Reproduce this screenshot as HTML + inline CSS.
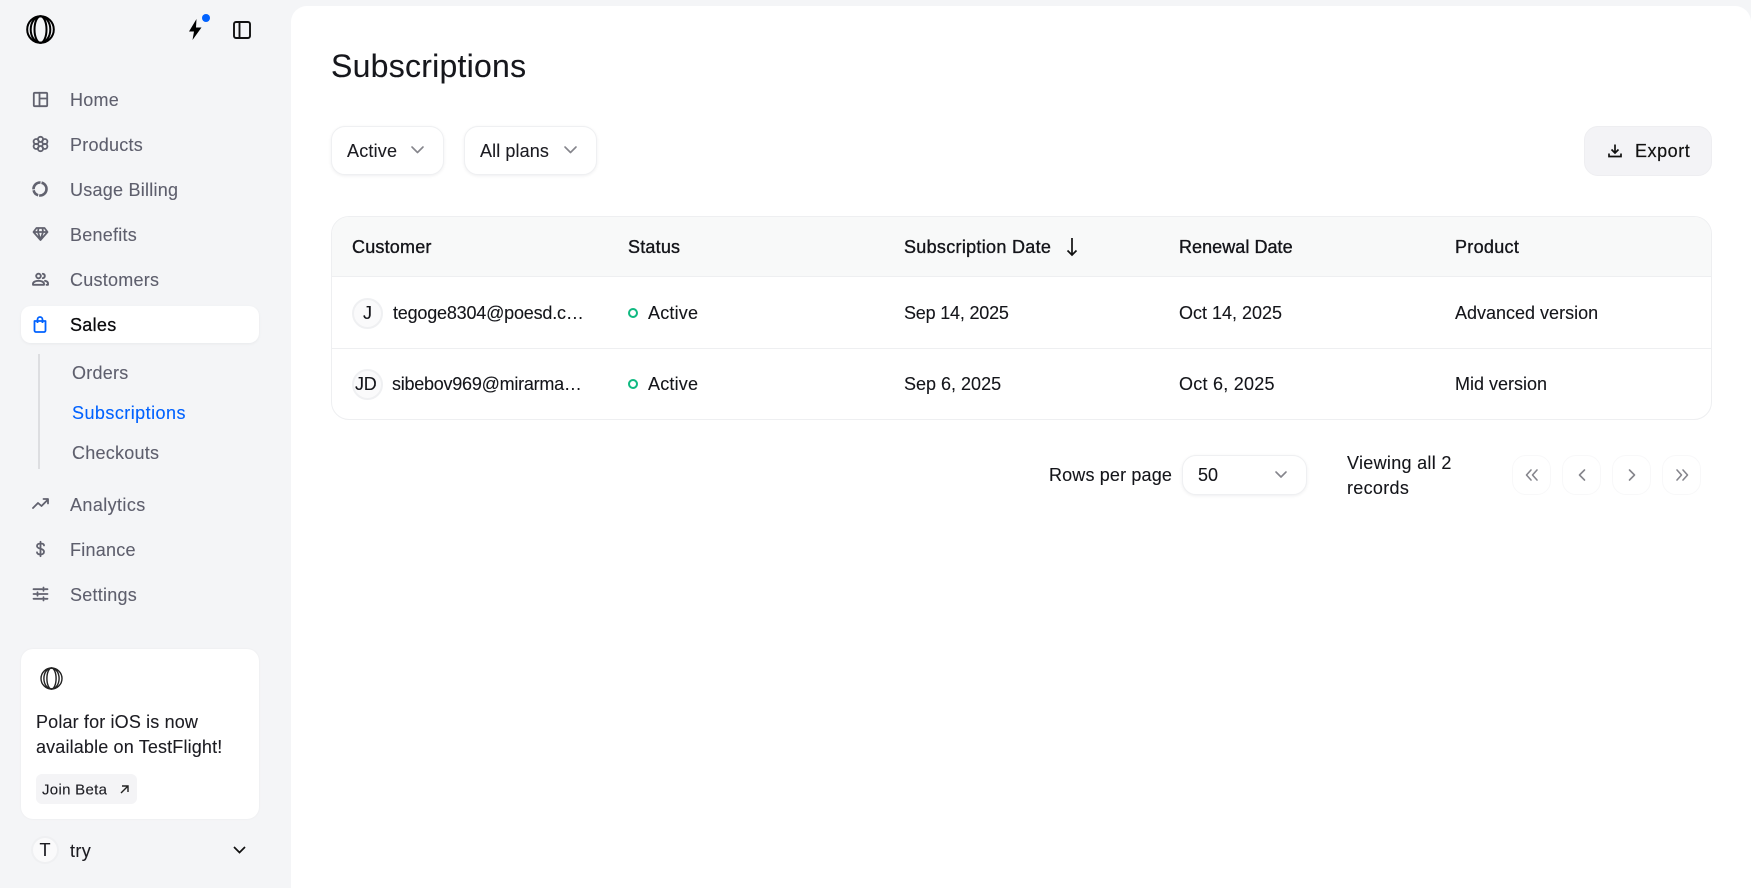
<!DOCTYPE html>
<html><head><meta charset="utf-8"><style>
html,body{margin:0;padding:0;width:1751px;height:888px;overflow:hidden;background:#f4f5f7;font-family:"Liberation Sans",sans-serif;color:#14151a}
.t{position:absolute;white-space:nowrap;line-height:1;transform:translateY(-50%);font-size:18px;letter-spacing:0;-webkit-text-stroke:.1px currentColor}
.n{color:#5e5f6d;letter-spacing:.25px}
.h{font-weight:400;-webkit-text-stroke:.35px #14151a;letter-spacing:.2px;font-size:18px}
.b{position:absolute;box-sizing:border-box}
svg{position:absolute;overflow:visible}
.btn{background:#fff;border:1px solid #eff0f2;border-radius:14px;box-shadow:0 1px 3px rgba(20,20,40,.07)}
.pg{position:absolute;box-sizing:border-box;top:455px;width:39px;height:40px;border:1px solid #f8f8f9;border-radius:14px}
.i{fill:none;stroke:#61626f;stroke-width:1.8;stroke-linecap:round;stroke-linejoin:round}
.c{fill:none;stroke:#85858c;stroke-width:1.6;stroke-linecap:round;stroke-linejoin:round}
</style></head><body>

<!-- main panel -->
<div class="b" style="left:291px;top:6px;width:1460px;height:882px;background:#fff;border-radius:16px 16px 0 0"></div>

<!-- top logo -->
<svg style="left:26px;top:15px" width="29" height="29" viewBox="0 0 29 29" fill="none" stroke="#000" stroke-width="2"><circle cx="14.500" cy="14.500" r="13.300"/><ellipse cx="14.500" cy="14.500" rx="9.800" ry="13.300"/><ellipse cx="14.500" cy="14.500" rx="6" ry="13.300"/></svg>
<!-- bolt -->
<svg style="left:188px;top:19px" width="14" height="21" viewBox="0 0 14 21"><path d="M8.500 0 1 12.500h5L4.500 21 13.500 8.500H8z" fill="#000"/></svg>
<div class="b" style="left:202px;top:14px;width:8px;height:8px;border-radius:50%;background:#0062ff"></div>
<!-- panel icon -->
<svg style="left:233px;top:21px" width="18" height="18" viewBox="0 0 18 18" fill="none" stroke="#111" stroke-width="1.900"><rect x="1" y="1" width="16" height="16" rx="2"/><path d="M6.500 1v16"/></svg>

<!-- nav icons -->
<svg class="i" style="left:33px;top:92px" width="15" height="15" viewBox="0 0 15 15"><rect x=".8" y=".8" width="13.400" height="13.400" rx="1"/><path d="M6.500 .8v13.400M6.500 6.500h7.700"/></svg>
<svg class="i" style="left:33px;top:136px" width="15" height="16" viewBox="0 0 15 16"><circle cx="7.500" cy="3.400" r="2.600"/><circle cx="7.500" cy="12.600" r="2.600"/><circle cx="3.200" cy="5.600" r="2.600"/><circle cx="11.800" cy="5.600" r="2.600"/><circle cx="3.200" cy="10.400" r="2.600"/><circle cx="11.800" cy="10.400" r="2.600"/></svg>
<svg class="i" style="left:32px;top:181px;stroke-width:2.600;stroke-linecap:butt" width="16" height="16" viewBox="0 0 16 16"><circle cx="8" cy="8" r="6.500" stroke-dasharray="11 1 7 1 11 1 9 1"/></svg>
<svg class="i" style="left:33px;top:227px" width="15" height="14" viewBox="0 0 15 14"><path d="M3.500 1h8l3 4-7 8-7-8zM.5 5h14M5 5l2.500 8 2.500-8M5.500 1 5 5M9.500 1 10 5"/></svg>
<svg class="i" style="left:32px;top:273px;stroke-width:1.900" width="17" height="13" viewBox="0 0 17 13"><circle cx="6.500" cy="3" r="2.300"/><path d="M1 11.800v-1c0-1.800 2.500-3 5.500-3s5.500 1.200 5.500 3v1zM10.800 .8c1.200 .2 2 1.100 2 2.200s-.8 2-2 2.200M13 7.800c2 .4 3 1.400 3 2.800v1.200h-1.500"/></svg>
<svg class="i" style="left:32px;top:498px" width="17" height="11" viewBox="0 0 17 11"><path d="M1 10l5-5 3.500 3L16 1.500M11.500 1H16v4.500"/></svg>
<svg class="i" style="left:36px;top:541px" width="9" height="16" viewBox="0 0 9 16"><path d="M8 4.500C8 3 6.500 2.500 4.500 2.500S1 3.300 1 5s1.500 2.300 3.500 2.800S8 9 8 10.800 6.500 13.500 4.500 13.500 1 12.800 1 11.300M4.500 .8v14.400"/></svg>
<svg class="i" style="left:33px;top:587px" width="15" height="14" viewBox="0 0 15 14"><path d="M.5 2.200h8.500M12 2.200h2.500M10.500 .5v3.400M.5 7h2.500M6 7h8.500M4.500 5.300v3.400M.5 11.800h8.500M12 11.800h2.500M10.500 10.100v3.400"/></svg>

<!-- nav -->
<div class="t n" style="left:70px;top:99.500px">Home</div>
<div class="t n" style="left:70px;top:144.500px">Products</div>
<div class="t n" style="left:70px;top:189.500px">Usage Billing</div>
<div class="t n" style="left:70px;top:234.500px">Benefits</div>
<div class="t n" style="left:70px;top:279.500px">Customers</div>
<div class="b" style="left:21px;top:306px;width:238px;height:37px;background:#fff;border-radius:10px;box-shadow:0 1px 3px rgba(20,20,40,.05)"></div>
<svg style="left:33px;top:316px" width="14" height="17" viewBox="0 0 14 17" fill="none" stroke="#0062ff" stroke-width="1.800" stroke-linejoin="round"><path d="M1.500 5h11v9.500a1.500 1.500 0 0 1-1.500 1.500H3a1.500 1.500 0 0 1-1.500-1.500z"/><path d="M4.500 7V3.500a2.500 2.500 0 0 1 5 0V7"/></svg>
<div class="t" style="left:70px;top:324.500px;color:#0a0a0c;letter-spacing:.3px;-webkit-text-stroke:.25px #0a0a0c">Sales</div>
<div class="b" style="left:38px;top:354px;width:2px;height:115px;background:#dddee1"></div>
<div class="t n" style="left:72px;top:373px">Orders</div>
<div class="t n" style="left:72px;top:413px;color:#0062ff;letter-spacing:.45px">Subscriptions</div>
<div class="t n" style="left:72px;top:453px">Checkouts</div>
<div class="t n" style="left:70px;top:504.500px;letter-spacing:.4px">Analytics</div>
<div class="t n" style="left:70px;top:549.500px">Finance</div>
<div class="t n" style="left:70px;top:594.500px">Settings</div>

<!-- card -->
<div class="b" style="left:21px;top:649px;width:238px;height:170px;background:#fff;border-radius:12px;box-shadow:0 0 2px rgba(20,20,40,.05)"></div>
<svg style="left:40px;top:667px" width="23" height="23" viewBox="0 0 23 23" fill="none" stroke="#222" stroke-width="1.400"><circle cx="11.500" cy="11.500" r="10.500"/><ellipse cx="11.500" cy="11.500" rx="7.600" ry="10.500"/><ellipse cx="11.500" cy="11.500" rx="4.600" ry="10.500"/></svg>
<div class="t" style="left:36px;top:721.500px;color:#1c1c22;letter-spacing:.15px">Polar for iOS is now</div>
<div class="t" style="left:36px;top:746.500px;color:#1c1c22;letter-spacing:.15px">available on TestFlight!</div>
<div class="b" style="left:36px;top:774px;width:101px;height:30px;background:#f4f4f6;border-radius:6px"></div>
<div class="t" style="left:42px;top:789.500px;font-size:15px;letter-spacing:.3px;color:#1c1c22">Join Beta</div>
<svg style="left:120px;top:785px" width="9" height="9" viewBox="0 0 9 9" fill="none" stroke="#222" stroke-width="1.400"><path d="M1 8l7-7M2 1h6v6"/></svg>
<!-- user -->
<div class="b" style="left:31px;top:836px;width:28px;height:28px;border-radius:50%;background:#fafafb;border:2px solid #eff0f2"></div>
<div class="t" style="left:39.500px;top:850px;color:#1c1c22">T</div>
<div class="t" style="left:70px;top:850.500px;color:#1c1c22;letter-spacing:.4px">try</div>
<svg style="left:233px;top:846px" width="13" height="8" viewBox="0 0 13 8" fill="none" stroke="#111" stroke-width="1.700"><path d="M1 1l5.500 5.500L12 1"/></svg>

<!-- heading -->
<div class="t" style="left:331px;top:66px;font-size:32px;letter-spacing:.25px;color:#16171c">Subscriptions</div>

<!-- filters -->
<div class="b btn" style="left:331px;top:126px;width:113px;height:49px"></div>
<div class="t" style="left:347px;top:150.500px;color:#1c1c22;letter-spacing:.2px">Active</div>
<svg class="c" style="left:411px;top:146px" width="13" height="8" viewBox="0 0 13 8"><path d="M1 1l5.500 5.500L12 1"/></svg>
<div class="b btn" style="left:464px;top:126px;width:133px;height:49px"></div>
<div class="t" style="left:480px;top:150.500px;color:#1c1c22;letter-spacing:.1px">All plans</div>
<svg class="c" style="left:564px;top:146px" width="13" height="8" viewBox="0 0 13 8"><path d="M1 1l5.500 5.500L12 1"/></svg>
<div class="b" style="left:1584px;top:126px;width:128px;height:50px;background:#f3f3f6;border:1px solid #eeeef1;border-radius:14px"></div>
<svg style="left:1608px;top:144px" width="14" height="14" viewBox="0 0 14 14" fill="none" stroke="#111" stroke-width="1.700"><path d="M7 .5v8M3.500 5.500 7 9l3.500-3.500M1 9.500v3h12v-3"/></svg>
<div class="t" style="left:1635px;top:151px;color:#111;letter-spacing:.55px;-webkit-text-stroke:.2px #111">Export</div>

<!-- table -->
<div class="b" style="left:331px;top:216px;width:1381px;height:204px;border:1px solid #eeeff1;border-radius:18px;overflow:hidden">
  <div class="b" style="left:0;top:0;width:100%;height:60px;background:#f8f9f9;border-bottom:1px solid #eeeff1"></div>
  <div class="b" style="left:0;top:131px;width:100%;height:1px;background:#eeeff1"></div>
</div>
<div class="t h" style="left:352px;top:247px">Customer</div>
<div class="t h" style="left:628px;top:247px">Status</div>
<div class="t h" style="left:904px;top:247px;letter-spacing:.3px">Subscription Date</div>
<svg style="left:1066px;top:237px" width="12" height="20" viewBox="0 0 12 20" fill="none" stroke="#111" stroke-width="1.700"><path d="M6 1v17M1.500 13.500 6 18l4.500-4.500"/></svg>
<div class="t h" style="left:1179px;top:247px;letter-spacing:.05px">Renewal Date</div>
<div class="t h" style="left:1455px;top:247px;letter-spacing:.3px">Product</div>

<div class="b" style="left:352px;top:298px;width:31px;height:31px;border-radius:50%;background:#fafafb;border:2px solid #eff0f2"></div>
<div class="t" style="left:363px;top:313px">J</div>
<div class="t" style="left:393px;top:313px;letter-spacing:-.2px">tegoge8304@poesd.c…</div>
<div class="b" style="left:628px;top:308px;width:10px;height:10px;border-radius:50%;border:2.500px solid #10b981"></div>
<div class="t" style="left:648px;top:313px;letter-spacing:.2px">Active</div>
<div class="t" style="left:904px;top:313px;letter-spacing:-.2px">Sep 14, 2025</div>
<div class="t" style="left:1179px;top:313px">Oct 14, 2025</div>
<div class="t" style="left:1455px;top:313px">Advanced version</div>

<div class="b" style="left:352px;top:369px;width:31px;height:31px;border-radius:50%;background:#fafafb;border:2px solid #eff0f2"></div>
<div class="t" style="left:355px;top:384px;letter-spacing:-.2px">JD</div>
<div class="t" style="left:392px;top:384px;letter-spacing:-.25px">sibebov969@mirarma…</div>
<div class="b" style="left:628px;top:379px;width:10px;height:10px;border-radius:50%;border:2.500px solid #10b981"></div>
<div class="t" style="left:648px;top:384px;letter-spacing:.2px">Active</div>
<div class="t" style="left:904px;top:384px">Sep 6, 2025</div>
<div class="t" style="left:1179px;top:384px;letter-spacing:.25px">Oct 6, 2025</div>
<div class="t" style="left:1455px;top:384px">Mid version</div>

<!-- pagination -->
<div class="t" style="left:1049px;top:475px;letter-spacing:.15px">Rows per page</div>
<div class="b btn" style="left:1182px;top:455px;width:125px;height:40px"></div>
<div class="t" style="left:1198px;top:475px">50</div>
<svg class="c" style="left:1275px;top:471px" width="12" height="8" viewBox="0 0 12 8"><path d="M1 1l5 5 5-5"/></svg>
<div class="t" style="left:1347px;top:462.500px;letter-spacing:.3px">Viewing all 2</div>
<div class="t" style="left:1347px;top:487.500px;letter-spacing:.3px">records</div>
<div class="pg" style="left:1512px"></div>
<div class="pg" style="left:1562px"></div>
<div class="pg" style="left:1612px"></div>
<div class="pg" style="left:1662px"></div>
<svg class="c" style="left:1525px;top:469px" width="14" height="12" viewBox="0 0 14 12"><path d="M6 1 1.500 6 6 11M12 1 7.500 6l4.500 5"/></svg>
<svg class="c" style="left:1578px;top:469px" width="8" height="12" viewBox="0 0 8 12"><path d="M6.500 1 1.500 6l5 5"/></svg>
<svg class="c" style="left:1628px;top:469px" width="8" height="12" viewBox="0 0 8 12"><path d="M1.500 1l5 5-5 5"/></svg>
<svg class="c" style="left:1675px;top:469px" width="14" height="12" viewBox="0 0 14 12"><path d="M2 1l4.500 5L2 11M8 1l4.500 5L8 11"/></svg>
</body></html>
